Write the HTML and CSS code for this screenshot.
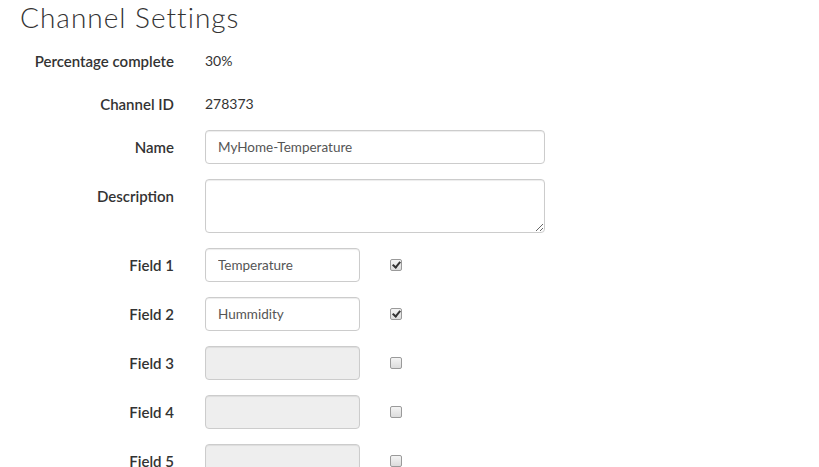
FILE: index.html
```html
<!DOCTYPE html>
<html>
<head>
<meta charset="utf-8">
<link rel="stylesheet" href="styles.css">
</head>
<body>
<h1 class="title">Channel Settings</h1>
<form class="settings">
  <div class="row static">
    <label class="lbl">Percentage complete</label>
    <div class="val">30%</div>
  </div>
  <div class="row static">
    <label class="lbl">Channel ID</label>
    <div class="val">278373</div>
  </div>
  <div class="row">
    <label class="lbl">Name</label>
    <div class="ctl"><input class="inp wide" type="text" value="MyHome-Temperature"></div>
  </div>
  <div class="row">
    <label class="lbl">Description</label>
    <div class="ctl"><textarea class="inp wide area"></textarea></div>
  </div>
  <div class="row">
    <label class="lbl">Field 1</label>
    <div class="ctl"><input class="inp field" type="text" value="Temperature"><span class="cb checked"></span></div>
  </div>
  <div class="row">
    <label class="lbl">Field 2</label>
    <div class="ctl"><input class="inp field" type="text" value="Hummidity"><span class="cb checked"></span></div>
  </div>
  <div class="row">
    <label class="lbl">Field 3</label>
    <div class="ctl"><input class="inp field" type="text" disabled><span class="cb"></span></div>
  </div>
  <div class="row">
    <label class="lbl">Field 4</label>
    <div class="ctl"><input class="inp field" type="text" disabled><span class="cb"></span></div>
  </div>
  <div class="row">
    <label class="lbl">Field 5</label>
    <div class="ctl"><input class="inp field" type="text" disabled><span class="cb"></span></div>
  </div>
</form>
</body>
</html>
```

FILE: styles.css
```css
html, body {
  margin: 0;
  padding: 0;
  background: #fff;
  overflow: hidden;
}
body {
  font-family: "Lato", "Open Sans", sans-serif;
  font-size: 15px;
  color: #333;
}
.title {
  margin: 0;
  padding-left: 20px;
  font-family: "Lato", sans-serif;
  font-weight: 300;
  font-size: 28px;
  line-height: 34px;
  color: #333;
  letter-spacing: 1px;
}
.settings {
  margin-top: 10px;
  display: flex;
  flex-direction: column;
  gap: 15px;
}
.row {
  display: grid;
  grid-template-columns: 174px 1fr;
  column-gap: 31px;
}
.row.static {
  height: 28px;
}
.lbl {
  text-align: right;
  font-weight: 600;
  padding-top: 7px;
  line-height: 21px;
  color: #333;
}
.val {
  padding-top: 7px;
  line-height: 20px;
  font-size: 14px;
  color: #333;
}
.ctl {
  display: flex;
  align-items: center;
  align-self: start;
}
.inp {
  box-sizing: border-box;
  height: 34px;
  border: 1px solid #ccc;
  border-radius: 4px;
  padding: 6px 12px;
  font-family: "Lato", "Open Sans", sans-serif;
  font-size: 13.5px;
  color: #555;
  background: #fff;
  box-shadow: inset 0 1px 1px rgba(0,0,0,0.075);
  margin: 0;
}
.inp:disabled {
  background: #eee;
}
.wide {
  width: 340px;
}
.area {
  height: 54px;
  resize: vertical;
  display: block;
}
.field {
  width: 155px;
}
.cb {
  box-sizing: border-box;
  width: 12px;
  height: 12px;
  margin-left: 30px;
  border: 1px solid #9a9a9a;
  border-radius: 2px;
  background: linear-gradient(#f4f4f4, #dcdcdc);
  position: relative;
}
.cb.checked::after {
  content: "";
  position: absolute;
  left: 3px;
  top: 0px;
  width: 3px;
  height: 6px;
  border-right: 2px solid #333;
  border-bottom: 2px solid #333;
  transform: rotate(40deg);
}
```
